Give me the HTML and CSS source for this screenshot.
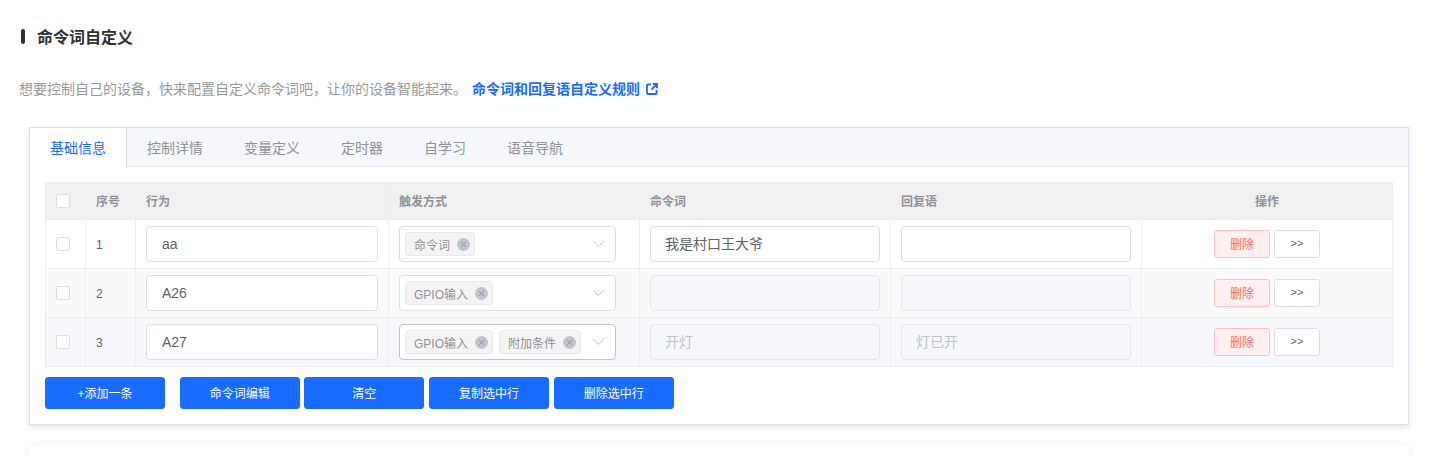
FILE: index.html
```html
<!DOCTYPE html>
<html lang="zh">
<head>
<meta charset="utf-8">
<title>命令词自定义</title>
<link rel="stylesheet" href="styles.css">
</head>
<body>
<main class="page">
  <h1 class="title">命令词自定义</h1>
  <p class="desc">想要控制自己的设备，快来配置自定义命令词吧，让你的设备智能起来。<a class="rule-link" href="#">命令词和回复语自定义规则<svg class="ext" viewBox="0 0 12 12" width="12" height="12"><path d="M5 1.4H2a1 1 0 0 0-1 1v7.6a1 1 0 0 0 1 1h7.6a1 1 0 0 0 1-1V7M6.8 1h4.2v4.2M10.7 1.3 5.4 6.6" fill="none" stroke="currentColor" stroke-width="1.8"/></svg></a></p>
  <section class="card">
    <div class="tabs">
      <span class="tab active">基础信息</span>
      <span class="tab">控制详情</span>
      <span class="tab">变量定义</span>
      <span class="tab">定时器</span>
      <span class="tab">自学习</span>
      <span class="tab">语音导航</span>
    </div>
    <div class="panel">
      <table class="grid">
        <colgroup>
          <col class="c-check"><col class="c-seq"><col class="c-act"><col class="c-wide"><col class="c-wide"><col class="c-wide"><col>
        </colgroup>
        <thead>
          <tr>
            <th><span class="box"></span></th>
            <th>序号</th>
            <th>行为</th>
            <th>触发方式</th>
            <th>命令词</th>
            <th>回复语</th>
            <th class="center">操作</th>
          </tr>
        </thead>
        <tbody>
          <tr>
            <td><span class="box"></span></td>
            <td class="seq">1</td>
            <td><div class="field">aa</div></td>
            <td><div class="select"><span class="chip">命令词<i class="x"><svg viewBox="0 0 13 13" width="13" height="13"><path d="M4 4l5 5M9 4l-5 5"/></svg></i></span><svg class="chev" viewBox="0 0 11 6" width="11" height="6"><path d="M.5.5 5.5 5.5 10.5.5"/></svg></div></td>
            <td><div class="field cjk">我是村口王大爷</div></td>
            <td><div class="field cjk"></div></td>
            <td class="center ops"><button class="btn-del">删除</button><button class="btn-more">&gt;&gt;</button></td>
          </tr>
          <tr class="even">
            <td><span class="box"></span></td>
            <td class="seq">2</td>
            <td><div class="field">A26</div></td>
            <td><div class="select"><span class="chip">GPIO输入<i class="x"><svg viewBox="0 0 13 13" width="13" height="13"><path d="M4 4l5 5M9 4l-5 5"/></svg></i></span><svg class="chev" viewBox="0 0 11 6" width="11" height="6"><path d="M.5.5 5.5 5.5 10.5.5"/></svg></div></td>
            <td><div class="field cjk off"></div></td>
            <td><div class="field cjk off"></div></td>
            <td class="center ops"><button class="btn-del">删除</button><button class="btn-more">&gt;&gt;</button></td>
          </tr>
          <tr class="hover">
            <td><span class="box"></span></td>
            <td class="seq">3</td>
            <td><div class="field">A27</div></td>
            <td><div class="select dark"><span class="chip">GPIO输入<i class="x"><svg viewBox="0 0 13 13" width="13" height="13"><path d="M4 4l5 5M9 4l-5 5"/></svg></i></span><span class="chip">附加条件<i class="x"><svg viewBox="0 0 13 13" width="13" height="13"><path d="M4 4l5 5M9 4l-5 5"/></svg></i></span><svg class="chev" viewBox="0 0 11 6" width="11" height="6"><path d="M.5.5 5.5 5.5 10.5.5"/></svg></div></td>
            <td><div class="field cjk off">开灯</div></td>
            <td><div class="field cjk off">灯已开</div></td>
            <td class="center ops"><button class="btn-del">删除</button><button class="btn-more">&gt;&gt;</button></td>
          </tr>
        </tbody>
      </table>
      <div class="actions">
        <button class="primary first">+添加一条</button>
        <button class="primary">命令词编辑</button>
        <button class="primary">清空</button>
        <button class="primary">复制选中行</button>
        <button class="primary">删除选中行</button>
      </div>
    </div>
  </section>
  <section class="card-next"></section>
</main>
</body>
</html>
```

FILE: styles.css
```css
* { box-sizing: border-box; }
html, body { margin: 0; height: 456px; overflow: hidden; background: #fff; }
body { font-family: "Liberation Sans", "Noto Sans CJK SC", sans-serif; color: #606266; }
.page { height: 456px; overflow: hidden; padding: 0 29px 0 19px; }
.title {
  margin: 0 0 0 2px; padding-top: 22px; height: 53px;
  font-size: 16px; line-height: 24px; font-weight: 700; color: #303133;
  display: flex; align-items: center;
}
.title::before { content: ""; width: 4px; height: 15px; border-radius: 2px; background: #303133; margin: 0 12px 2px 0; }
.desc { margin: 25px 0 0; height: 22px; font-size: 14px; line-height: 22px; color: #999; display: flex; align-items: center; }
.rule-link { margin-left: 5px; color: #1a6bff; font-weight: 700; text-decoration: none; display: inline-flex; align-items: center; }
.ext { margin-left: 6px; }
.card { margin: 27px 0 0 10px; height: 298px; border: 1px solid #dcdfe6; background: #fff; box-shadow: 0 2px 6px rgba(0,0,0,.12); }
.tabs { display: flex; height: 39px; background: #f5f7fa; border-bottom: 1px solid #e4e7ed; }
.tab { padding: 1px 20px 0; margin-right: 1px; font-size: 14px; line-height: 38px; color: #909399; }
.tab.active { height: 39px; background: #fff; color: #1a6bff; border-right: 1px solid #dcdfe6; margin-right: 0; }
.panel { padding: 15px 15px 0; }
.grid { width: 1348px; border-collapse: collapse; table-layout: fixed; border: 1px solid #ebeef5; }
.c-check { width: 40px; }
.c-seq { width: 50px; }
.c-act { width: 253px; }
.c-wide { width: 251px; }
.grid th { height: 37px; padding: 0 10px 1px; background: #f0f0f1; border: 1px solid #ebeef5; font-size: 12px; font-weight: 700; color: #909399; text-align: left; }
.grid td { height: 49px; padding: 0 10px; border: 1px solid #ebeef5; font-size: 12px; }
.grid .center { text-align: center; }
.even td { background: #fafafa; }
.hover td { background: #f7f8fb; }
.grid .seq { padding-top: 1px; color: #606266; }
.box { display: block; width: 14px; height: 14px; background: #fff; border: 1px solid #dcdfe6; border-radius: 2px; }
.field { height: 36px; padding: 0 15px; border: 1px solid #dcdfe6; border-radius: 4px; background: #fff; font-size: 14px; line-height: 34px; color: #606266; }
.field.cjk { padding-left: 14px; }
.field.off { background: #f5f7fa; border-color: #e4e7ed; color: #c0c4cc; }
.select { position: relative; width: 217px; height: 36px; padding: 5px; display: flex; gap: 6px; border: 1px solid #dcdfe6; border-radius: 4px; background: #fff; }
.select.dark { border-color: #c0c4cc; }
.chip { display: inline-flex; align-items: center; height: 24px; padding: 0 4px 0 8px; background: #f4f4f5; border: 1px solid #e9e9eb; border-radius: 4px; font-size: 12px; color: #909399; }
.x { width: 13px; height: 13px; margin-left: 7px; border-radius: 50%; background: #c0c4cc; display: block; }
.x svg { display: block; fill: none; stroke: #909399; stroke-width: 1; }
.chev { position: absolute; right: 11px; top: 14px; fill: none; stroke: #c0c4cc; stroke-width: 1; }
button { font-family: inherit; cursor: pointer; }
.ops { white-space: nowrap; }
.btn-del, .btn-more { height: 28px; padding: 0; border-radius: 3px; font-size: 12px; vertical-align: middle; }
.btn-del { width: 56px; padding-bottom: 1px; background: #fef0f0; border: 1px solid #fbc4c4; color: #f56c6c; }
.btn-more { width: 46px; margin-left: 4px; padding-bottom: 2px; background: #fff; border: 1px solid #dcdfe6; color: #606266; font-size: 11px; }
.actions { display: flex; gap: 4.7px; margin-top: 10px; }
.primary { width: 120px; height: 32px; padding: 0 0 1px; background: #1a6bff; border: 1px solid #1a6bff; border-radius: 3px; color: #fff; font-size: 12px; }
.primary.first { margin-right: 10px; }
.card-next { margin: 20px 0 0 10px; height: 60px; background: #fff; box-shadow: 0 0 8px rgba(0,0,0,.06); }
```
